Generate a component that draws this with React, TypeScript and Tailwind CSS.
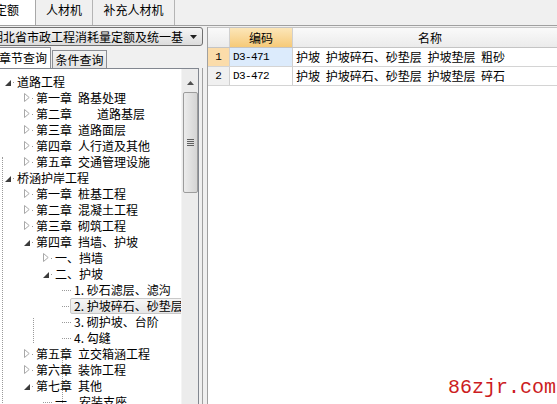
import React from "react";

type TreeRow = {
  head: string;
  name?: string;
  gap?: number;
  level: number;
  state: "open" | "closed" | "leaf";
  selected?: boolean;
};

const rows: TreeRow[] = [
  { head: "道路工程", level: 0, state: "open" },
  { head: "第一章", name: "路基处理", level: 1, state: "closed" },
  { head: "第二章", name: "道路基层", gap: 25, level: 1, state: "closed" },
  { head: "第三章", name: "道路面层", level: 1, state: "closed" },
  { head: "第四章", name: "人行道及其他", level: 1, state: "closed" },
  { head: "第五章", name: "交通管理设施", level: 1, state: "closed" },
  { head: "桥涵护岸工程", level: 0, state: "open" },
  { head: "第一章", name: "桩基工程", level: 1, state: "closed" },
  { head: "第二章", name: "混凝土工程", level: 1, state: "closed" },
  { head: "第三章", name: "砌筑工程", level: 1, state: "closed" },
  { head: "第四章", name: "挡墙、护坡", level: 1, state: "open" },
  { head: "一、挡墙", level: 2, state: "closed" },
  { head: "二、护坡", level: 2, state: "open" },
  { head: "1. 砂石滤层、滤沟", level: 3, state: "leaf" },
  { head: "2. 护坡碎石、砂垫层", level: 3, state: "leaf", selected: true },
  { head: "3. 砌护坡、台阶", level: 3, state: "leaf" },
  { head: "4. 勾缝", level: 3, state: "leaf" },
  { head: "第五章", name: "立交箱涵工程", level: 1, state: "closed" },
  { head: "第六章", name: "装饰工程", level: 1, state: "closed" },
  { head: "第七章", name: "其他", level: 1, state: "open" },
  { head: "一、安装支座", level: 2, state: "leaf" },
];

const indent = [17, 36, 55, 74];

const Expander = ({ open }: { open: boolean }) =>
  open ? (
    <svg width="6" height="6" viewBox="0 0 6 6">
      <path d="M6 0 L6 6 L0 6 Z" fill="#3c3c3c" />
    </svg>
  ) : (
    <svg width="6" height="9" viewBox="0 0 6 9">
      <path d="M0.5 0.5 L5.2 4.5 L0.5 8.5 Z" fill="#fff" stroke="#a8a8a8" />
    </svg>
  );

const TreeItem = ({ row }: { row: TreeRow }) => {
  const x = indent[row.level];
  return (
    <div className="relative h-[16px] flex items-center whitespace-nowrap" style={{ paddingLeft: x }}>
      {row.state !== "leaf" && (
        <>
          <span
            className={`absolute flex ${row.state === "open" ? "top-[6px]" : "top-[3px]"}`}
            style={{ left: x - 12 }}
          >
            <Expander open={row.state === "open"} />
          </span>
          <span className="absolute top-[8px] w-[1px] h-[1px] bg-[#9a9a9a]" style={{ left: x - 4 }} />
        </>
      )}
      {row.state === "leaf" && (
        <span
          className="absolute top-[8px] w-[9px] border-t border-dotted border-[#9a9a9a]"
          style={{ left: x - 12 }}
        />
      )}
      {row.selected && (
        <span className="absolute left-[70px] top-0 h-[16px] w-[120px] rounded-[2px] border border-[#c9c9c9] bg-gradient-to-b from-[#f6f6f6] to-[#e6e6e6]" />
      )}
      <span className="relative leading-[16px]">{row.head}</span>
      {row.name && (
        <span className="relative leading-[16px]" style={{ marginLeft: row.gap ?? 6 }}>
          {row.name}
        </span>
      )}
    </div>
  );
};

const Scrollbar = () => (
  <div className="w-[17px] shrink-0 bg-[#ececec] flex flex-col items-center border-l border-[#f4f4f4]">
    <div className="h-[21px] w-full flex justify-center pt-[12px]">
      <svg width="7" height="4" viewBox="0 0 7 4">
        <path d="M3.5 0 L7 4 L0 4 Z" fill="#505050" />
      </svg>
    </div>
    <div className="mt-[2px] h-[101px] w-[15px] rounded-[2px] border border-[#9c9c9c] bg-gradient-to-r from-[#ececec] to-[#d4d4d4] flex flex-col items-center justify-center gap-[1px]">
      <span className="w-[7px] h-[1px] bg-[#606060]" />
      <span className="w-[7px] h-[1px] bg-[#606060]" />
      <span className="w-[7px] h-[1px] bg-[#606060]" />
      <span className="w-[7px] h-[1px] bg-[#606060]" />
    </div>
  </div>
);

export default function App() {
  return (
    <div className="relative w-[557px] h-[404px] overflow-hidden bg-[#f0f0f0] text-[12px] text-black font-['Noto_Sans_CJK_SC','Liberation_Sans',sans-serif]">
      {/* top tabs */}
      <div className="flex h-[26px] border-b border-[#a0a0a0]">
        <div className="-ml-[21px] w-[57px] h-[25px] pb-[5px] flex items-center justify-center bg-white border-r border-[#a8a8a8]">
          定额
        </div>
        <div className="w-[57px] h-[25px] pb-[5px] flex items-center justify-center border-r border-[#b4b4b4]">
          人材机
        </div>
        <div className="w-[82px] h-[25px] pb-[5px] flex items-center justify-center border-r border-[#b4b4b4]">
          补充人材机
        </div>
      </div>

      <div className="flex h-[378px]">
        {/* left pane */}
        <div className="w-[203px] shrink-0 flex flex-col">
          <div className="mt-[1px] -ml-[10px] w-[213px] h-[19px] rounded-[3px] border border-[#707070] bg-gradient-to-b from-[#f5f5f5] to-[#dcdcdc] flex items-center whitespace-nowrap overflow-hidden">
            <span className="flex-1 leading-[16px]">湖北省市政工程消耗量定额及统一基</span>
            <svg className="mr-[5px] shrink-0" width="7" height="4" viewBox="0 0 7 4">
              <path d="M0 0 L7 0 L3.5 4 Z" fill="#202020" />
            </svg>
          </div>

          <div className="h-[22px] flex items-end">
            <div className="-ml-[4px] w-[55px] h-[21px] bg-white border-t border-r border-[#8c8e94] flex items-center justify-center leading-[16px]">
              章节查询
            </div>
            <div className="ml-[1px] w-[55px] h-[18px] bg-gradient-to-b from-[#f2f2f2] to-[#e4e4e4] border border-b-0 border-[#8c8e94] flex items-center justify-center leading-[16px]">
              条件查询
            </div>
          </div>

          <div className="flex-1 min-h-0 border-r border-[#a0a0a0] pr-[3px]">
            <div className="h-full flex bg-white border-t border-r border-[#828790]">
              <div className="relative flex-1 overflow-hidden pt-[5px]">
                {/* tree lines */}
                <span className="absolute left-[2px] top-[88px] h-[320px] border-l border-dotted border-[#9a9a9a]" />
                <span className="absolute left-[33px] top-[249px] h-[25px] border-l border-dotted border-[#9a9a9a]" />
                <span className="absolute left-[62px] top-[281px] h-[57px] border-l border-dotted border-[#9a9a9a]" />
                <span className="absolute left-[43px] top-[393px] h-[8px] border-l border-dotted border-[#9a9a9a]" />
                {rows.map((r, i) => (
                  <TreeItem key={i} row={r} />
                ))}
              </div>
              <Scrollbar />
            </div>
          </div>
        </div>

        {/* right grid */}
        <div className="ml-[4px] mt-[1px] flex-1 min-w-0 bg-white border-l border-[#a0a0a0] overflow-hidden">
          <div className="flex h-[21px] border-t border-b border-[#c4c4c4] bg-gradient-to-b from-[#fafafa] to-[#ebebeb]">
            <div className="w-[22px] shrink-0 border-r border-[#d0d0d0]" />
            <div className="w-[63px] shrink-0 border-r border-[#d0d0d0] bg-gradient-to-b from-[#fce6b8] to-[#f6ca78] flex items-center justify-center leading-[16px]">
              编码
            </div>
            <div className="w-[274px] shrink-0 flex items-center justify-center leading-[16px]">名称</div>
          </div>
          {[
            { n: "1", code: "D3-471", name: "护坡 护坡碎石、砂垫层 护坡垫层 粗砂", sel: true },
            { n: "2", code: "D3-472", name: "护坡 护坡碎石、砂垫层 护坡垫层 碎石", sel: false },
          ].map((r) => (
            <div key={r.n} className="flex h-[19px] border-b border-[#d4d4d4]">
              <div
                className={`w-[22px] shrink-0 border-r border-[#d0d0d0] flex items-center justify-center font-['Liberation_Mono',monospace] text-[11px] ${
                  r.sel ? "bg-[#fbdcaa]" : "bg-[#f0f0f0]"
                }`}
              >
                {r.n}
              </div>
              <div
                className={`w-[63px] shrink-0 border-r border-[#d0d0d0] pl-[3px] flex items-center font-['Liberation_Mono',monospace] text-[11px] tracking-[-0.6px] ${
                  r.sel ? "bg-[#dcebfc]" : ""
                }`}
              >
                {r.code}
              </div>
              <div className="w-[274px] shrink-0 pl-[3px] flex items-center whitespace-nowrap leading-[16px] [word-spacing:3px]">
                {r.name}
              </div>
            </div>
          ))}
        </div>
      </div>

      <div className="absolute left-[448px] top-[378px] text-[20px] leading-[20px] text-[#cc1c22] font-['Liberation_Mono',monospace]">
        86zjr.com
      </div>
    </div>
  );
}
